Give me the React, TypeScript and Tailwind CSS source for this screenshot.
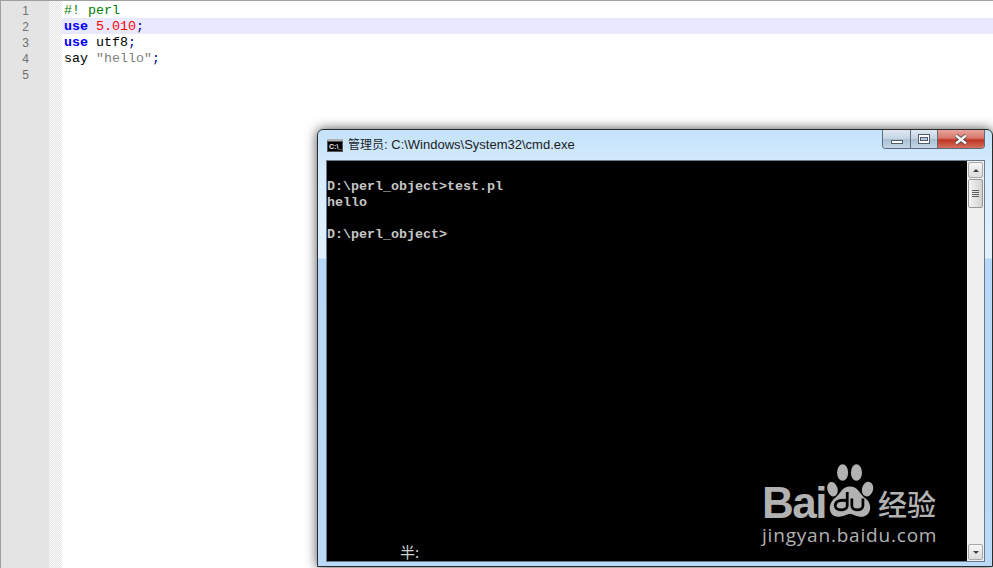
export default function App() {
  const mono = "font-['Liberation_Mono','Courier_New',monospace] text-[13.33px] leading-[16px] whitespace-pre";
  return (
    <div className="relative w-[993px] h-[568px] overflow-hidden bg-white border-t border-[#a0a0a0]">
      <div className="flex h-full">
        <div className="w-[49px] shrink-0 bg-[#e4e4e4] border-l border-[#a0a0a0] pt-[1px] pr-[20px] text-right font-['Liberation_Sans',sans-serif] text-[12px] leading-[18px] text-[#707070]">
          {[1, 2, 3, 4, 5].map((n) => (
            <div key={n} className="h-[16px]">{n}</div>
          ))}
        </div>
        <div className="w-[13px] shrink-0 bg-[repeating-conic-gradient(#e4e4e4_0_25%,#fbfbfb_0_50%)] bg-[length:2px_2px]" />
        <div className={`flex-1 pt-[1px] ${mono} leading-[18px]`}>
          <div className="h-[16px] pl-[2px] text-[#008000]">#! perl</div>
          <div className="h-[16px] pl-[2px] bg-[#e8e8ff]">
            <span className="font-bold text-[#0000ff]">use</span> <span className="text-[#ff0000]">5.010</span><span className="text-[#000080]">;</span>
          </div>
          <div className="h-[16px] pl-[2px] text-black">
            <span className="font-bold text-[#0000ff]">use</span> utf8<span className="text-[#000080]">;</span>
          </div>
          <div className="h-[16px] pl-[2px] text-black">
            say <span className="text-[#808080]">"hello"</span><span className="text-[#000080]">;</span>
          </div>
        </div>
      </div>

      {/* cmd window */}
      <div className="absolute left-[317px] top-[128px] w-[676px] h-[438px] rounded-t-[6px] border border-[#2a2a2a] shadow-[0_0_12px_rgba(0,0,0,0.7)] bg-[linear-gradient(180deg,#c4e2fb_0px,#d6ecfd_40px,#e2f1fd_128px,#b7d8f8_129px,#b9daf9_100%)] pl-[8px] flex flex-col">
        <div className="h-[30px] shrink-0 flex items-center relative">
          <svg width="16" height="13" viewBox="0 0 16 13" className="shrink-0 ml-[1px] mt-[1px]">
            <rect width="16" height="13" fill="#555555" />
            <rect x="0" y="0" width="16" height="2" fill="#b0b0b0" />
            <rect x="1" y="3" width="14" height="9" fill="#000" />
            <text x="2" y="10" fontSize="7" fontWeight="700" fill="#e8e8e8" fontFamily="'Liberation Sans',sans-serif">C:\_</text>
          </svg>
          <span className="ml-[5px] mb-[1px] font-['Liberation_Sans','Noto_Sans_CJK_SC',sans-serif] text-[13px] text-[#1c1c1c] whitespace-pre"><span className="text-[12px]">管理员</span>: C:\Windows\System32\cmd.exe</span>
          <div className="absolute left-[556px] top-0 w-[103px] h-[19px] flex rounded-b-[4px] border border-t-0 border-[#5d6b7c] overflow-hidden">
            <div className="w-[28px] bg-[linear-gradient(180deg,#dfe8f1_0%,#c3d3e3_50%,#a9bfd4_51%,#c4d6e6_100%)] border-r border-[#5d6b7c] flex items-center justify-center">
              <div className="w-[12px] h-[4px] mt-[5px] bg-white border border-[#505c6a]" />
            </div>
            <div className="w-[27px] bg-[linear-gradient(180deg,#dfe8f1_0%,#c3d3e3_50%,#a9bfd4_51%,#c4d6e6_100%)] border-r border-[#5d6b7c] flex items-center justify-center">
              <div className="w-[12px] h-[10px] bg-white border border-[#505c6a] flex items-center justify-center">
                <div className="w-[8px] h-[4px] border border-[#505c6a] bg-[#b8c8d8]" />
              </div>
            </div>
            <div className="flex-1 bg-[linear-gradient(180deg,#e9a49a_0%,#d8786c_45%,#bf3522_55%,#d5705e_100%)] flex items-center justify-center">
              <svg width="14" height="11" viewBox="0 0 14 11">
                <path d="M2 1.500 L12 9.500 M12 1.500 L2 9.500" stroke="#3f3f3f" strokeWidth="4" />
                <path d="M2 1.500 L12 9.500 M12 1.500 L2 9.500" stroke="#f4f4f4" strokeWidth="2.500" />
              </svg>
            </div>
          </div>
        </div>
        <div className="w-[659px] h-[402px] flex border border-[#6d7a88] shrink-0">
          <div className={`w-[640px] shrink-0 bg-black pt-[18px] font-bold text-[#c6c6c6] ${mono}`}>
            <div>D:\perl_object&gt;test.pl</div>
            <div>hello</div>
            <div>&nbsp;</div>
            <div>D:\perl_object&gt;</div>
          </div>
          <div className="flex-1 bg-[#f0f0f0] flex flex-col justify-between px-[1px] py-[1px]">
            <div>
              <div className="h-[16px] rounded-[2px] border border-[#a8a8a8] bg-[linear-gradient(180deg,#f6f6f6,#dcdcdc)] flex items-center justify-center">
                <div className="w-0 h-0 border-x-[3px] border-x-transparent border-b-[3px] border-b-[#404040]" />
              </div>
              <div className="mt-[1px] h-[29px] rounded-[2px] border border-[#979797] bg-[linear-gradient(90deg,#f4f4f4,#d2d2d2)] flex flex-col items-center justify-center gap-[1px]">
                <div className="w-[7px] h-[1px] bg-[#606060]" />
                <div className="w-[7px] h-[1px] bg-[#606060]" />
                <div className="w-[7px] h-[1px] bg-[#606060]" />
                <div className="w-[7px] h-[1px] bg-[#606060]" />
              </div>
            </div>
            <div className="h-[16px] rounded-[2px] border border-[#a8a8a8] bg-[linear-gradient(180deg,#f6f6f6,#dcdcdc)] flex items-center justify-center">
              <div className="w-0 h-0 border-x-[3px] border-x-transparent border-t-[3px] border-t-[#404040]" />
            </div>
          </div>
        </div>
      </div>

      <div className="absolute left-[400px] top-[542px] flex items-end font-['Noto_Sans_CJK_SC',sans-serif] text-[15px] leading-[17px] text-[#d0d0d0]">半:</div>

      {/* watermark */}
      <div className="absolute left-[762px] top-[461px] w-[180px] h-[84px] text-[#b2b2b2]">
        <span className="absolute left-0 top-[23px] font-['Liberation_Sans',sans-serif] font-bold text-[44px] leading-[36px] tracking-[-1.500px]">Bai</span>
        <svg className="absolute left-[64px] top-[1px]" width="48" height="56" viewBox="0 0 52 60">
          <ellipse cx="7" cy="28" rx="5.500" ry="8" fill="#b2b2b2" transform="rotate(-15 7 28)" />
          <ellipse cx="18" cy="10" rx="6" ry="9" fill="#b2b2b2" />
          <ellipse cx="33" cy="10" rx="6" ry="9" fill="#b2b2b2" />
          <ellipse cx="45" cy="28" rx="6" ry="8" fill="#b2b2b2" transform="rotate(15 45 28)" />
          <path d="M26 25 C35 25 36 33 43 38 C51 44 49 58 38 58 C33 58 30 55 26 55 C22 55 19 58 13 58 C3 58 1 45 9 38 C16 33 17 25 26 25 Z" fill="#b2b2b2" />
          <path d="M23 31 v15 c0 6 -13 6 -13 0 c0 -6 8 -7 13 -5" fill="none" stroke="#000" strokeWidth="3" />
          <path d="M28 38 v8 c0 6 12 6 12 0 v-8" fill="none" stroke="#000" strokeWidth="3" />
        </svg>
        <span className="absolute left-[116px] top-[25px] font-['Noto_Sans_CJK_SC',sans-serif] font-medium text-[29px] leading-[32px] whitespace-pre">经验</span>
        <span className="absolute left-0 top-[61px] font-['Open_Sans',sans-serif] text-[19px] leading-[24px] tracking-[0.800px] whitespace-pre">jingyan.baidu.com</span>
      </div>
    </div>
  );
}
